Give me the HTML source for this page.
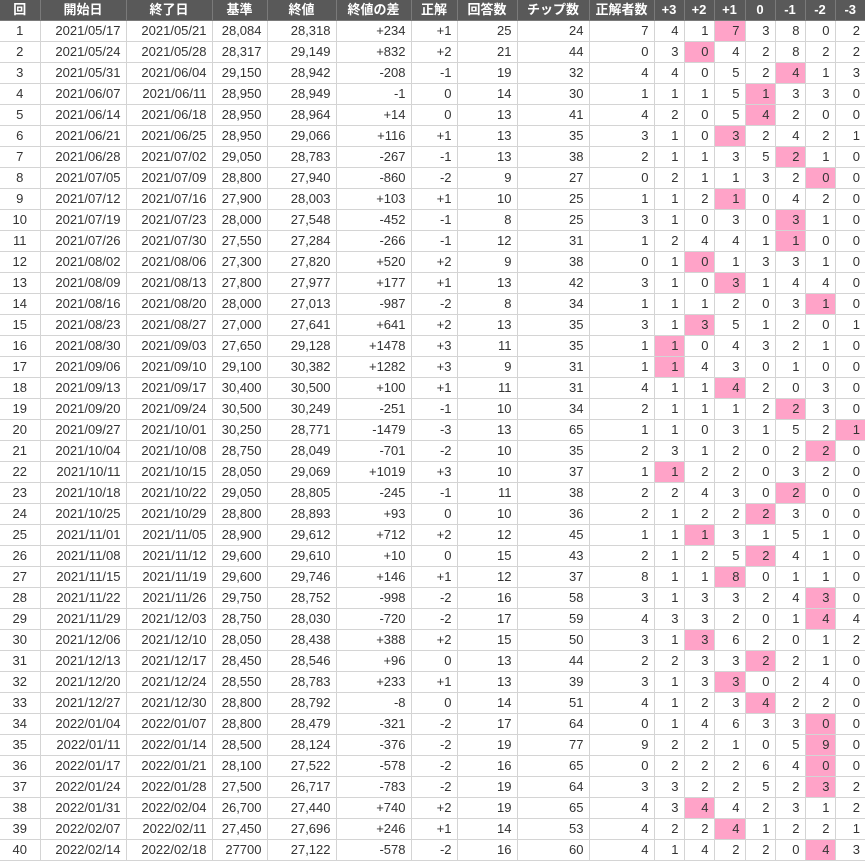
<!DOCTYPE html>
<html><head><meta charset="utf-8">
<style>
html,body{margin:0;padding:0;background:#fff;}
table{border-collapse:collapse;table-layout:fixed;width:865px;font-family:"Liberation Sans","Noto Sans CJK JP",sans-serif;font-size:13px;color:#333;}
td,th{height:20px;padding:0 5px 0 0;border:1px solid #d4d4d4;text-align:right;white-space:nowrap;overflow:hidden;line-height:20px;}
th{background:#595959;color:#fff;font-weight:bold;text-align:center;padding:0;border-color:#7a7a7a;border-top:none;}
tr td:first-child{text-align:center;padding:0;}
tr>*:first-child{border-left:none;}
tr>*:last-child{border-right:none;}
td.p{background:#ffa3c8;}
</style></head><body>
<table>
<colgroup><col style="width:40px"><col style="width:86px"><col style="width:86px"><col style="width:55px"><col style="width:69px"><col style="width:75px"><col style="width:46px"><col style="width:60px"><col style="width:72px"><col style="width:65px"><col style="width:30px"><col style="width:30px"><col style="width:31px"><col style="width:30px"><col style="width:30px"><col style="width:30px"><col style="width:30px"></colgroup>
<tr><th>回</th><th>開始日</th><th>終了日</th><th>基準</th><th>終値</th><th>終値の差</th><th>正解</th><th>回答数</th><th>チップ数</th><th>正解者数</th><th>+3</th><th>+2</th><th>+1</th><th>0</th><th>-1</th><th>-2</th><th>-3</th></tr>
<tr><td>1</td><td>2021/05/17</td><td>2021/05/21</td><td>28,084</td><td>28,318</td><td>+234</td><td>+1</td><td>25</td><td>24</td><td>7</td><td>4</td><td>1</td><td class="p">7</td><td>3</td><td>8</td><td>0</td><td>2</td></tr>
<tr><td>2</td><td>2021/05/24</td><td>2021/05/28</td><td>28,317</td><td>29,149</td><td>+832</td><td>+2</td><td>21</td><td>44</td><td>0</td><td>3</td><td class="p">0</td><td>4</td><td>2</td><td>8</td><td>2</td><td>2</td></tr>
<tr><td>3</td><td>2021/05/31</td><td>2021/06/04</td><td>29,150</td><td>28,942</td><td>-208</td><td>-1</td><td>19</td><td>32</td><td>4</td><td>4</td><td>0</td><td>5</td><td>2</td><td class="p">4</td><td>1</td><td>3</td></tr>
<tr><td>4</td><td>2021/06/07</td><td>2021/06/11</td><td>28,950</td><td>28,949</td><td>-1</td><td>0</td><td>14</td><td>30</td><td>1</td><td>1</td><td>1</td><td>5</td><td class="p">1</td><td>3</td><td>3</td><td>0</td></tr>
<tr><td>5</td><td>2021/06/14</td><td>2021/06/18</td><td>28,950</td><td>28,964</td><td>+14</td><td>0</td><td>13</td><td>41</td><td>4</td><td>2</td><td>0</td><td>5</td><td class="p">4</td><td>2</td><td>0</td><td>0</td></tr>
<tr><td>6</td><td>2021/06/21</td><td>2021/06/25</td><td>28,950</td><td>29,066</td><td>+116</td><td>+1</td><td>13</td><td>35</td><td>3</td><td>1</td><td>0</td><td class="p">3</td><td>2</td><td>4</td><td>2</td><td>1</td></tr>
<tr><td>7</td><td>2021/06/28</td><td>2021/07/02</td><td>29,050</td><td>28,783</td><td>-267</td><td>-1</td><td>13</td><td>38</td><td>2</td><td>1</td><td>1</td><td>3</td><td>5</td><td class="p">2</td><td>1</td><td>0</td></tr>
<tr><td>8</td><td>2021/07/05</td><td>2021/07/09</td><td>28,800</td><td>27,940</td><td>-860</td><td>-2</td><td>9</td><td>27</td><td>0</td><td>2</td><td>1</td><td>1</td><td>3</td><td>2</td><td class="p">0</td><td>0</td></tr>
<tr><td>9</td><td>2021/07/12</td><td>2021/07/16</td><td>27,900</td><td>28,003</td><td>+103</td><td>+1</td><td>10</td><td>25</td><td>1</td><td>1</td><td>2</td><td class="p">1</td><td>0</td><td>4</td><td>2</td><td>0</td></tr>
<tr><td>10</td><td>2021/07/19</td><td>2021/07/23</td><td>28,000</td><td>27,548</td><td>-452</td><td>-1</td><td>8</td><td>25</td><td>3</td><td>1</td><td>0</td><td>3</td><td>0</td><td class="p">3</td><td>1</td><td>0</td></tr>
<tr><td>11</td><td>2021/07/26</td><td>2021/07/30</td><td>27,550</td><td>27,284</td><td>-266</td><td>-1</td><td>12</td><td>31</td><td>1</td><td>2</td><td>4</td><td>4</td><td>1</td><td class="p">1</td><td>0</td><td>0</td></tr>
<tr><td>12</td><td>2021/08/02</td><td>2021/08/06</td><td>27,300</td><td>27,820</td><td>+520</td><td>+2</td><td>9</td><td>38</td><td>0</td><td>1</td><td class="p">0</td><td>1</td><td>3</td><td>3</td><td>1</td><td>0</td></tr>
<tr><td>13</td><td>2021/08/09</td><td>2021/08/13</td><td>27,800</td><td>27,977</td><td>+177</td><td>+1</td><td>13</td><td>42</td><td>3</td><td>1</td><td>0</td><td class="p">3</td><td>1</td><td>4</td><td>4</td><td>0</td></tr>
<tr><td>14</td><td>2021/08/16</td><td>2021/08/20</td><td>28,000</td><td>27,013</td><td>-987</td><td>-2</td><td>8</td><td>34</td><td>1</td><td>1</td><td>1</td><td>2</td><td>0</td><td>3</td><td class="p">1</td><td>0</td></tr>
<tr><td>15</td><td>2021/08/23</td><td>2021/08/27</td><td>27,000</td><td>27,641</td><td>+641</td><td>+2</td><td>13</td><td>35</td><td>3</td><td>1</td><td class="p">3</td><td>5</td><td>1</td><td>2</td><td>0</td><td>1</td></tr>
<tr><td>16</td><td>2021/08/30</td><td>2021/09/03</td><td>27,650</td><td>29,128</td><td>+1478</td><td>+3</td><td>11</td><td>35</td><td>1</td><td class="p">1</td><td>0</td><td>4</td><td>3</td><td>2</td><td>1</td><td>0</td></tr>
<tr><td>17</td><td>2021/09/06</td><td>2021/09/10</td><td>29,100</td><td>30,382</td><td>+1282</td><td>+3</td><td>9</td><td>31</td><td>1</td><td class="p">1</td><td>4</td><td>3</td><td>0</td><td>1</td><td>0</td><td>0</td></tr>
<tr><td>18</td><td>2021/09/13</td><td>2021/09/17</td><td>30,400</td><td>30,500</td><td>+100</td><td>+1</td><td>11</td><td>31</td><td>4</td><td>1</td><td>1</td><td class="p">4</td><td>2</td><td>0</td><td>3</td><td>0</td></tr>
<tr><td>19</td><td>2021/09/20</td><td>2021/09/24</td><td>30,500</td><td>30,249</td><td>-251</td><td>-1</td><td>10</td><td>34</td><td>2</td><td>1</td><td>1</td><td>1</td><td>2</td><td class="p">2</td><td>3</td><td>0</td></tr>
<tr><td>20</td><td>2021/09/27</td><td>2021/10/01</td><td>30,250</td><td>28,771</td><td>-1479</td><td>-3</td><td>13</td><td>65</td><td>1</td><td>1</td><td>0</td><td>3</td><td>1</td><td>5</td><td>2</td><td class="p">1</td></tr>
<tr><td>21</td><td>2021/10/04</td><td>2021/10/08</td><td>28,750</td><td>28,049</td><td>-701</td><td>-2</td><td>10</td><td>35</td><td>2</td><td>3</td><td>1</td><td>2</td><td>0</td><td>2</td><td class="p">2</td><td>0</td></tr>
<tr><td>22</td><td>2021/10/11</td><td>2021/10/15</td><td>28,050</td><td>29,069</td><td>+1019</td><td>+3</td><td>10</td><td>37</td><td>1</td><td class="p">1</td><td>2</td><td>2</td><td>0</td><td>3</td><td>2</td><td>0</td></tr>
<tr><td>23</td><td>2021/10/18</td><td>2021/10/22</td><td>29,050</td><td>28,805</td><td>-245</td><td>-1</td><td>11</td><td>38</td><td>2</td><td>2</td><td>4</td><td>3</td><td>0</td><td class="p">2</td><td>0</td><td>0</td></tr>
<tr><td>24</td><td>2021/10/25</td><td>2021/10/29</td><td>28,800</td><td>28,893</td><td>+93</td><td>0</td><td>10</td><td>36</td><td>2</td><td>1</td><td>2</td><td>2</td><td class="p">2</td><td>3</td><td>0</td><td>0</td></tr>
<tr><td>25</td><td>2021/11/01</td><td>2021/11/05</td><td>28,900</td><td>29,612</td><td>+712</td><td>+2</td><td>12</td><td>45</td><td>1</td><td>1</td><td class="p">1</td><td>3</td><td>1</td><td>5</td><td>1</td><td>0</td></tr>
<tr><td>26</td><td>2021/11/08</td><td>2021/11/12</td><td>29,600</td><td>29,610</td><td>+10</td><td>0</td><td>15</td><td>43</td><td>2</td><td>1</td><td>2</td><td>5</td><td class="p">2</td><td>4</td><td>1</td><td>0</td></tr>
<tr><td>27</td><td>2021/11/15</td><td>2021/11/19</td><td>29,600</td><td>29,746</td><td>+146</td><td>+1</td><td>12</td><td>37</td><td>8</td><td>1</td><td>1</td><td class="p">8</td><td>0</td><td>1</td><td>1</td><td>0</td></tr>
<tr><td>28</td><td>2021/11/22</td><td>2021/11/26</td><td>29,750</td><td>28,752</td><td>-998</td><td>-2</td><td>16</td><td>58</td><td>3</td><td>1</td><td>3</td><td>3</td><td>2</td><td>4</td><td class="p">3</td><td>0</td></tr>
<tr><td>29</td><td>2021/11/29</td><td>2021/12/03</td><td>28,750</td><td>28,030</td><td>-720</td><td>-2</td><td>17</td><td>59</td><td>4</td><td>3</td><td>3</td><td>2</td><td>0</td><td>1</td><td class="p">4</td><td>4</td></tr>
<tr><td>30</td><td>2021/12/06</td><td>2021/12/10</td><td>28,050</td><td>28,438</td><td>+388</td><td>+2</td><td>15</td><td>50</td><td>3</td><td>1</td><td class="p">3</td><td>6</td><td>2</td><td>0</td><td>1</td><td>2</td></tr>
<tr><td>31</td><td>2021/12/13</td><td>2021/12/17</td><td>28,450</td><td>28,546</td><td>+96</td><td>0</td><td>13</td><td>44</td><td>2</td><td>2</td><td>3</td><td>3</td><td class="p">2</td><td>2</td><td>1</td><td>0</td></tr>
<tr><td>32</td><td>2021/12/20</td><td>2021/12/24</td><td>28,550</td><td>28,783</td><td>+233</td><td>+1</td><td>13</td><td>39</td><td>3</td><td>1</td><td>3</td><td class="p">3</td><td>0</td><td>2</td><td>4</td><td>0</td></tr>
<tr><td>33</td><td>2021/12/27</td><td>2021/12/30</td><td>28,800</td><td>28,792</td><td>-8</td><td>0</td><td>14</td><td>51</td><td>4</td><td>1</td><td>2</td><td>3</td><td class="p">4</td><td>2</td><td>2</td><td>0</td></tr>
<tr><td>34</td><td>2022/01/04</td><td>2022/01/07</td><td>28,800</td><td>28,479</td><td>-321</td><td>-2</td><td>17</td><td>64</td><td>0</td><td>1</td><td>4</td><td>6</td><td>3</td><td>3</td><td class="p">0</td><td>0</td></tr>
<tr><td>35</td><td>2022/01/11</td><td>2022/01/14</td><td>28,500</td><td>28,124</td><td>-376</td><td>-2</td><td>19</td><td>77</td><td>9</td><td>2</td><td>2</td><td>1</td><td>0</td><td>5</td><td class="p">9</td><td>0</td></tr>
<tr><td>36</td><td>2022/01/17</td><td>2022/01/21</td><td>28,100</td><td>27,522</td><td>-578</td><td>-2</td><td>16</td><td>65</td><td>0</td><td>2</td><td>2</td><td>2</td><td>6</td><td>4</td><td class="p">0</td><td>0</td></tr>
<tr><td>37</td><td>2022/01/24</td><td>2022/01/28</td><td>27,500</td><td>26,717</td><td>-783</td><td>-2</td><td>19</td><td>64</td><td>3</td><td>3</td><td>2</td><td>2</td><td>5</td><td>2</td><td class="p">3</td><td>2</td></tr>
<tr><td>38</td><td>2022/01/31</td><td>2022/02/04</td><td>26,700</td><td>27,440</td><td>+740</td><td>+2</td><td>19</td><td>65</td><td>4</td><td>3</td><td class="p">4</td><td>4</td><td>2</td><td>3</td><td>1</td><td>2</td></tr>
<tr><td>39</td><td>2022/02/07</td><td>2022/02/11</td><td>27,450</td><td>27,696</td><td>+246</td><td>+1</td><td>14</td><td>53</td><td>4</td><td>2</td><td>2</td><td class="p">4</td><td>1</td><td>2</td><td>2</td><td>1</td></tr>
<tr><td>40</td><td>2022/02/14</td><td>2022/02/18</td><td>27700</td><td>27,122</td><td>-578</td><td>-2</td><td>16</td><td>60</td><td>4</td><td>1</td><td>4</td><td>2</td><td>2</td><td>0</td><td class="p">4</td><td>3</td></tr>
</table>
</body></html>
